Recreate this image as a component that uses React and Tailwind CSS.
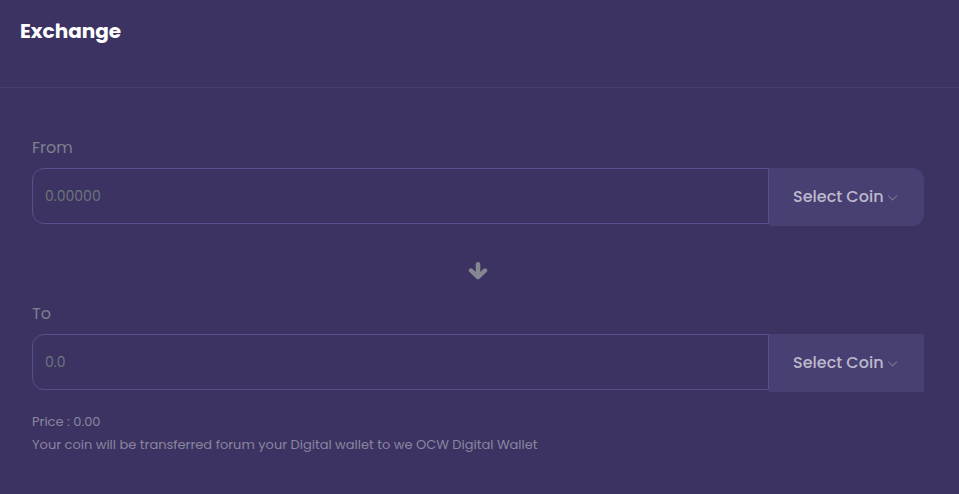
import React from "react";

function Chevron() {
  return (
    <svg
      className="pointer-events-none absolute top-6 right-[25px] size-3 text-[#77718f]"
      viewBox="0 0 12 12"
      fill="none"
      stroke="currentColor"
      strokeWidth="1.2"
      aria-hidden="true"
    >
      <path d="M1.3 3.7 L5.6 8 L9.9 3.7" />
    </svg>
  );
}

function CoinField({ id, label, placeholder, selectClass }) {
  return (
    <div>
      <label htmlFor={id} className="block text-base leading-6 text-[#7f7f8e]">
        {label}
      </label>
      <div className="mt-2 flex items-start">
        <input
          id={id}
          type="text"
          placeholder={placeholder}
          className="h-14 min-w-0 flex-1 rounded-l-xl border border-[#584e8a] bg-transparent px-3 text-sm text-white outline-none placeholder:text-[#6c757d]"
        />
        <div className="relative w-[155px] shrink-0">
          <select
            aria-label={`${label} coin`}
            className={`h-[58px] w-full appearance-none bg-[#483f72] pl-6 text-base font-medium text-[#bdb9cd] outline-none ${selectClass}`}
          >
            <option>Select Coin</option>
          </select>
          <Chevron />
        </div>
      </div>
    </div>
  );
}

export default function App() {
  return (
    <main className="min-h-screen bg-[#3c3363] font-['Poppins','Inter',sans-serif]">
      <header className="h-22 border-b border-[#463d70] px-5 pt-4">
        <h1 className="text-xl leading-[30px] font-bold text-white">Exchange</h1>
      </header>
      <form className="pt-12 pr-[35px] pl-8">
        <CoinField id="from" label="From" placeholder="0.00000" selectClass="rounded-r-xl" />
        <div className="flex h-[76px] items-center justify-center pt-3.5">
          <svg
            className="size-5 text-[#858893]"
            viewBox="0 0 20 20"
            fill="none"
            stroke="currentColor"
            strokeLinecap="round"
            strokeLinejoin="round"
            aria-hidden="true"
          >
            <path d="M10 3.4 V15" strokeWidth="4.6" />
            <path d="M2.9 9.4 L10 16.1 L17.1 9.4" strokeWidth="4.2" />
          </svg>
        </div>
        <CoinField id="to" label="To" placeholder="0.0" selectClass="rounded-none" />
        <div className="mt-[18px] text-[13px] leading-[23px] text-[#8a859f]">
          <p>Price : 0.00</p>
          <p>Your coin will be transferred forum your Digital wallet to we OCW Digital Wallet</p>
        </div>
      </form>
    </main>
  );
}
